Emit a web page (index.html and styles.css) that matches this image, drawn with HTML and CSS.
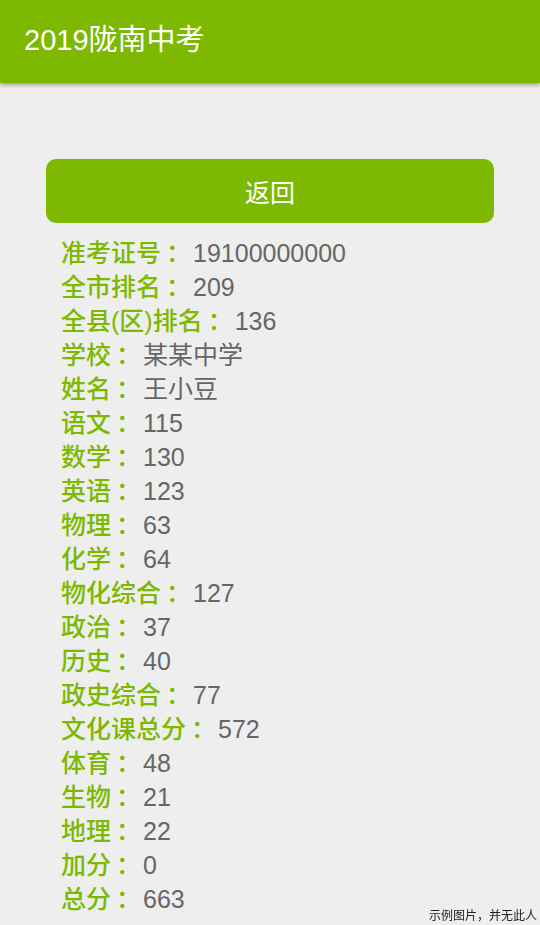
FILE: index.html
```html
<!DOCTYPE html>
<html lang="zh-CN">
<head>
<meta charset="utf-8">
<title>2019陇南中考</title>
<link rel="stylesheet" href="styles.css">
</head>
<body>
<header class="topbar"><h1 class="title">2019陇南中考</h1></header>
<main class="content">
  <button class="back">返回</button>
  <ul class="scores">
    <li><span class="k">准考证号<span class="c">：</span></span><span class="v">19100000000</span></li>
    <li><span class="k">全市排名<span class="c">：</span></span><span class="v">209</span></li>
    <li><span class="k">全县(区)排名<span class="c">：</span></span><span class="v">136</span></li>
    <li><span class="k">学校<span class="c">：</span></span><span class="v">某某中学</span></li>
    <li><span class="k">姓名<span class="c">：</span></span><span class="v">王小豆</span></li>
    <li><span class="k">语文<span class="c">：</span></span><span class="v">115</span></li>
    <li><span class="k">数学<span class="c">：</span></span><span class="v">130</span></li>
    <li><span class="k">英语<span class="c">：</span></span><span class="v">123</span></li>
    <li><span class="k">物理<span class="c">：</span></span><span class="v">63</span></li>
    <li><span class="k">化学<span class="c">：</span></span><span class="v">64</span></li>
    <li><span class="k">物化综合<span class="c">：</span></span><span class="v">127</span></li>
    <li><span class="k">政治<span class="c">：</span></span><span class="v">37</span></li>
    <li><span class="k">历史<span class="c">：</span></span><span class="v">40</span></li>
    <li><span class="k">政史综合<span class="c">：</span></span><span class="v">77</span></li>
    <li><span class="k">文化课总分<span class="c">：</span></span><span class="v">572</span></li>
    <li><span class="k">体育<span class="c">：</span></span><span class="v">48</span></li>
    <li><span class="k">生物<span class="c">：</span></span><span class="v">21</span></li>
    <li><span class="k">地理<span class="c">：</span></span><span class="v">22</span></li>
    <li><span class="k">加分<span class="c">：</span></span><span class="v">0</span></li>
    <li><span class="k">总分<span class="c">：</span></span><span class="v">663</span></li>
  </ul>
</main>
<div class="note">示例图片，并无此人</div>
</body>
</html>
```

FILE: styles.css
```css
html, body {
  margin: 0;
  padding: 0;
  background: #eeeeee;
  font-family: "Liberation Sans", "Noto Sans CJK SC", sans-serif;
}
.topbar {
  height: 83px;
  background: #7cb900;
  box-shadow: 0 2px 4px rgba(0, 0, 0, 0.35);
  display: flex;
  align-items: center;
  padding-left: 24px;
}
.title {
  margin: 0;
  color: #ffffff;
  font-weight: normal;
  font-size: 29px;
  line-height: 1;
  margin-top: -2px;
}
.content {
  padding: 76px 46px 0 46px;
}
.back {
  display: block;
  width: 100%;
  height: 64px;
  border: none;
  border-radius: 10px;
  background: #7cb900;
  color: #ffffff;
  font-family: "Liberation Sans", "Noto Sans CJK SC", sans-serif;
  font-size: 25px;
  padding: 0;
}
.scores {
  list-style: none;
  margin: 13px 0 0 0;
  padding: 0 0 0 15px;
}
.scores li {
  height: 34px;
  line-height: 34px;
  font-size: 25px;
  white-space: nowrap;
}
.k {
  color: #7cb900;
  font-weight: 500;
}
.c {
  padding-left: 5px;
}
.v {
  color: #666666;
  margin-left: 2px;
}
.note {
  position: fixed;
  right: 3px;
  bottom: 2px;
  font-size: 12px;
  color: #222222;
}
```
